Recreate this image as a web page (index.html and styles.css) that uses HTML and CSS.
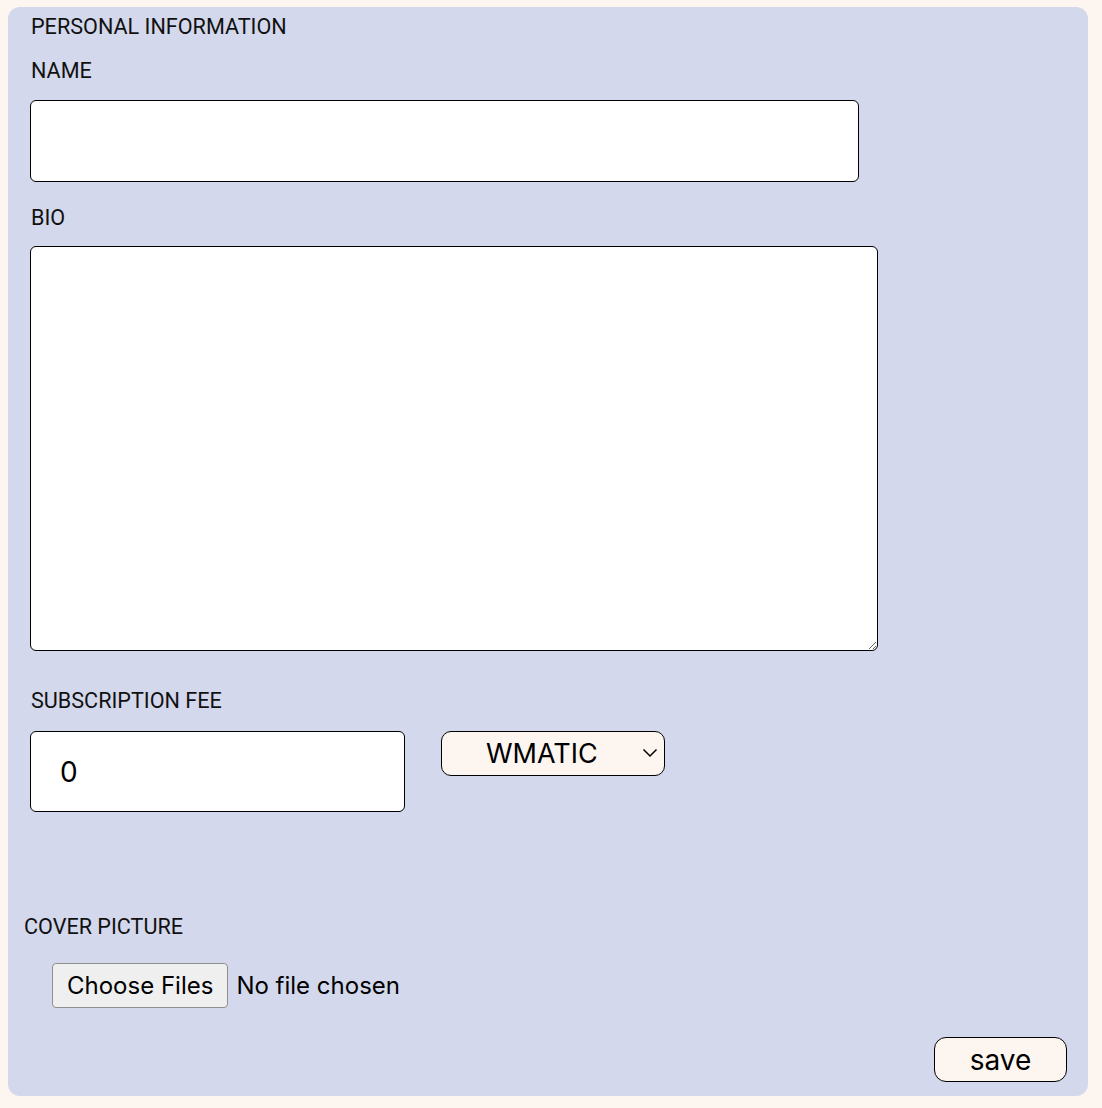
FILE: index.html
```html
<!DOCTYPE html>
<html lang="en">
<head>
    <meta charset="UTF-8">
    <meta name="viewport" content="width=device-width, initial-scale=1.0">
    <title>Edit Profile</title>
    <link rel="stylesheet" href="styles.css">
</head>
<body>
    <form class="profile-card">
        <h2 class="section-title">PERSONAL INFORMATION</h2>

        <label class="field-label" for="name">NAME</label>
        <input type="text" id="name" class="name-input">

        <label class="field-label bio-label" for="bio">BIO</label>
        <textarea id="bio" class="bio-input"></textarea>

        <label class="field-label fee-label" for="fee">SUBSCRIPTION FEE</label>
        <div class="fee-row">
            <input type="number" id="fee" class="fee-input" value="0">
            <span class="token-select">
                <select id="token">
                    <option>WMATIC</option>
                    <option>USDC</option>
                </select>
                <svg class="chevron" width="16" height="10" viewBox="0 0 16 10">
                    <path d="M1.5 1.5 L8 8 L14.5 1.5" fill="none" stroke="#000" stroke-width="1.5"/>
                </svg>
            </span>
        </div>

        <label class="field-label cover-label" for="cover">COVER PICTURE</label>
        <input type="file" id="cover" class="cover-input" multiple>

        <button type="button" class="save-btn">save</button>
    </form>
</body>
</html>
```

FILE: styles.css
```css
:root {
    --page-bg: #fdf5ef;
    --card-bg: #d4d8ec;
    --text-color: #000;
}

body {
    margin: 0;
    padding: 7px 14px 12px 8px;
    background-color: var(--page-bg);
    color: var(--text-color);
    font-family: Roboto, 'Liberation Sans', sans-serif;
}

.profile-card {
    display: flex;
    flex-direction: column;
    align-items: flex-start;
    background-color: var(--card-bg);
    border-radius: 12px;
    padding: 8px 21px 14px 22px;
    height: 1089px;
    box-sizing: border-box;
}

.section-title,
.field-label {
    margin: 0;
    font-size: 21.6px;
    font-weight: 400;
    line-height: 24px;
    padding-left: 1px;
    color: #111;
}

.field-label {
    margin-top: 20px;
}

.name-input,
.bio-input,
.fee-input {
    box-sizing: border-box;
    border: 1px solid #000;
    border-radius: 6px;
    background: white;
    font-family: Inter, 'Liberation Sans', sans-serif;
    font-size: 28px;
    outline: none;
}

.name-input {
    width: 829px;
    height: 82px;
    margin-top: 17px;
    padding: 0 28px;
}

.bio-label {
    margin-top: 24px;
}

.bio-input {
    width: 848px;
    height: 405px;
    margin-top: 16px;
    padding: 12px;
    resize: both;
}

.fee-label {
    margin-top: 38px;
}

.fee-row {
    display: flex;
    align-items: flex-start;
    gap: 36px;
    margin-top: 18px;
}

.fee-input {
    width: 375px;
    height: 81px;
    padding: 0 29px;
    -moz-appearance: textfield;
}

.fee-input::-webkit-inner-spin-button,
.fee-input::-webkit-outer-spin-button {
    -webkit-appearance: none;
    margin: 0;
}

.token-select {
    position: relative;
    display: inline-block;
}

.token-select select {
    appearance: none;
    -webkit-appearance: none;
    box-sizing: border-box;
    width: 224px;
    height: 45px;
    padding: 0 44px 0 44px;
    border: 1px solid #000;
    border-radius: 10px;
    background-color: var(--page-bg);
    color: #000;
    font-family: Inter, 'Liberation Sans', sans-serif;
    font-size: 27px;
    outline: none;
}

.chevron {
    position: absolute;
    right: 7px;
    top: 17px;
    pointer-events: none;
}

.cover-label {
    margin-top: 103px;
    margin-left: -7px;
}

.cover-input {
    margin-top: 24px;
    margin-left: 22px;
    font-family: Inter, 'Liberation Sans', sans-serif;
    font-size: 24px;
    color: #000;
}

.cover-input::file-selector-button {
    height: 45px;
    padding: 0 14px;
    margin-right: 8px;
    border: 1px solid #8f8f8f;
    border-radius: 4px;
    background-color: #efefef;
    font-family: Inter, 'Liberation Sans', sans-serif;
    font-size: 24px;
    color: #000;
}

.save-btn {
    align-self: flex-end;
    margin-top: 29px;
    width: 133px;
    height: 45px;
    border: 1px solid #000;
    border-radius: 12px;
    background-color: var(--page-bg);
    font-family: Inter, 'Liberation Sans', sans-serif;
    font-size: 28px;
    color: #000;
    cursor: pointer;
}
```
